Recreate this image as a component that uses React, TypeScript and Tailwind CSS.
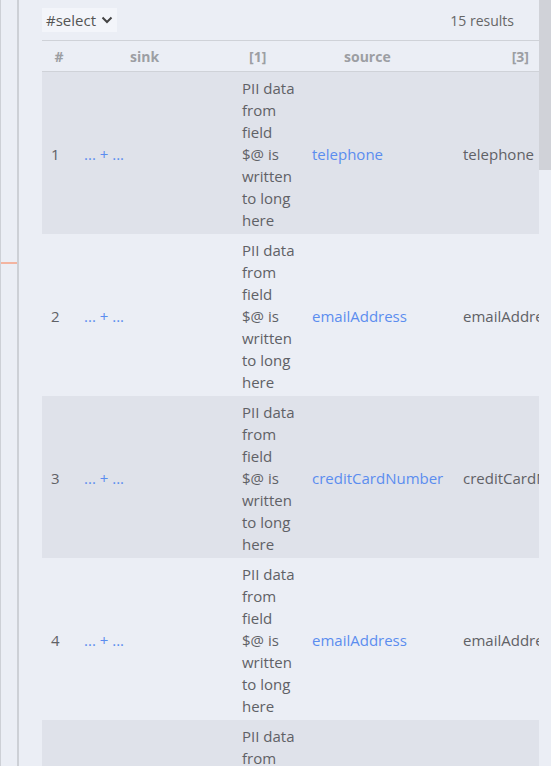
import React from "react";

const rows = [
  { n: 1, source: "telephone" },
  { n: 2, source: "emailAddress" },
  { n: 3, source: "creditCardNumber" },
  { n: 4, source: "emailAddress" },
  { n: 5, source: "telephone" },
];

const Chevron = () => (
  <svg width="12" height="12" viewBox="0 0 12 12" className="ml-[5px]">
    <path d="M1.5 3.5l4.5 4.5 4.5-4.5" fill="none" stroke="#444" strokeWidth="2" />
  </svg>
);

export default function App() {
  return (
    <div
      className="flex h-[766px] w-[551px] overflow-hidden bg-[#ebeef5] text-[15px] text-[#5f6166]"
      style={{ fontFamily: '"Open Sans", "Liberation Sans", sans-serif' }}
    >
      {/* left gutter */}
      <div className="relative w-[19px] shrink-0 border-l border-r-2 border-[#cdd0d6] bg-[#ebeef5]">
        <div className="absolute left-0 right-0 top-[262px] h-[2px] bg-[#f3b4a0]" />
      </div>

      <main className="min-w-0 flex-1 pl-[23px]">
        <div className="flex h-[40px] items-center justify-between pr-[25px]">
          <button className="flex h-[24px] items-center bg-[#f3f5fa] px-[4px] text-[15px] text-[#555]">
            #select
            <Chevron />
          </button>
          <span className="text-[14px] text-[#666]">15 results</span>
        </div>

        <div className="grid grid-cols-[34px_157px_70px_151px_1fr] border-t border-b border-[#cfd2d8] text-[14px] font-bold text-[#9c9ea3]">
          <div className="flex h-[30px] items-center justify-center pt-[1px]">#</div>
          <div className="flex items-center pl-[54px] pt-[1px]">sink</div>
          <div className="flex items-center pl-[16px] pt-[1px]">[1]</div>
          <div className="flex items-center pl-[41px] pt-[1px]">source</div>
          <div className="flex items-center justify-end pr-[10px] pt-[1px]">[3]</div>
        </div>

        {rows.map((r, i) => (
          <div
            key={r.n}
            className={`grid grid-cols-[34px_157px_70px_151px_1fr] items-center ${
              i % 2 === 0 ? "bg-[#dfe2ea]" : "bg-[#ebeef5]"
            }`}
          >
            <div className="pl-[9px] pt-[2px]">{r.n}</div>
            <div className="pl-[8px] pt-[2px] text-[15px] text-[#5b8def]">... + ...</div>
            <div className="pb-[3px] pl-[9px] pt-[5px]">
              <div className="w-[53px] leading-[22px]">
                PII data from field $@ is written to long here
              </div>
            </div>
            <div className="whitespace-nowrap pl-[9px] pt-[2px] text-[#5b8def]">{r.source}</div>
            <div className="overflow-hidden whitespace-nowrap pl-[9px] pt-[2px]">{r.source}</div>
          </div>
        ))}
      </main>

      {/* scrollbar */}
      <div className="w-[12px] shrink-0 bg-[#ebeef5]">
        <div className="h-[170px] bg-[#d0d2d8]" />
      </div>
    </div>
  );
}
